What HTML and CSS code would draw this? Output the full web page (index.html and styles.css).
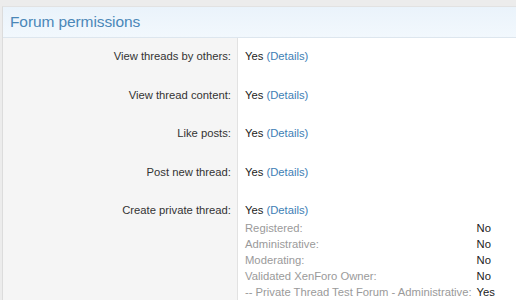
FILE: index.html
```html
<!DOCTYPE html>
<html>
<head>
<meta charset="utf-8">
<link rel="stylesheet" href="styles.css">
</head>
<body>
<div class="panel">
  <h2 class="panel-title">Forum permissions</h2>
  <div class="rows">
    <div class="row">
      <div class="label">View threads by others:</div>
      <div class="value">Yes <a class="link">(Details)</a></div>
    </div>
    <div class="row">
      <div class="label">View thread content:</div>
      <div class="value">Yes <a class="link">(Details)</a></div>
    </div>
    <div class="row">
      <div class="label">Like posts:</div>
      <div class="value">Yes <a class="link">(Details)</a></div>
    </div>
    <div class="row">
      <div class="label">Post new thread:</div>
      <div class="value">Yes <a class="link">(Details)</a></div>
    </div>
    <div class="row last">
      <div class="label">Create private thread:</div>
      <div class="value">
        <div>Yes <a class="link">(Details)</a></div>
        <div class="details">
          <span class="dlabel">Registered:</span><span class="dval">No</span>
          <span class="dlabel">Administrative:</span><span class="dval">No</span>
          <span class="dlabel">Moderating:</span><span class="dval">No</span>
          <span class="dlabel">Validated XenForo Owner:</span><span class="dval">No</span>
          <span class="dlabel">-- Private Thread Test Forum - Administrative:</span><span class="dval">Yes</span>
        </div>
      </div>
    </div>
  </div>
</div>
</body>
</html>
```
FILE: styles.css
```css
html, body {
  margin: 0;
  padding: 0;
}
body {
  background: #ececec;
  font-family: "Liberation Sans", Arial, sans-serif;
  font-size: 11.25px;
  color: #333;
  padding: 6px 0 0 2px;
  height: 300px;
  box-sizing: border-box;
  overflow: hidden;
}
.panel {
  border-top: 1px solid #e2e2e2;
  border-left: 1px solid #dcdcdc;
  background: #f5f5f5;
  height: 293px;
  overflow: hidden;
}
.panel-title {
  margin: 0;
  font-weight: normal;
  font-size: 15.5px;
  letter-spacing: -0.1px;
  color: #4a87b8;
  background: linear-gradient(to bottom, #eaf3fb, #f2f8fd);
  border-bottom: 1px solid #dde6ee;
  padding: 5px 7px 5px 7px;
  line-height: 20px;
}
.row {
  display: flex;
}
.label {
  width: 234px;
  box-sizing: border-box;
  text-align: right;
  padding: 10px 6px 12px 0;
  line-height: 16.5px;
  color: #333;
}
.value {
  flex: 1;
  background: #fff;
  border-left: 1px solid #e2e2e2;
  padding: 10px 7px 12px 7px;
  line-height: 16.5px;
  color: #222;
}
.link {
  color: #3d7eb5;
}
.row.last .value {
  padding-bottom: 0;
}
.details {
  display: grid;
  grid-template-columns: auto auto;
  justify-content: start;
  column-gap: 5px;
  line-height: 16px;
  margin-top: 1px;
}
.dlabel {
  color: #9a9a9a;
}
.dval {
  color: #222;
}
```
